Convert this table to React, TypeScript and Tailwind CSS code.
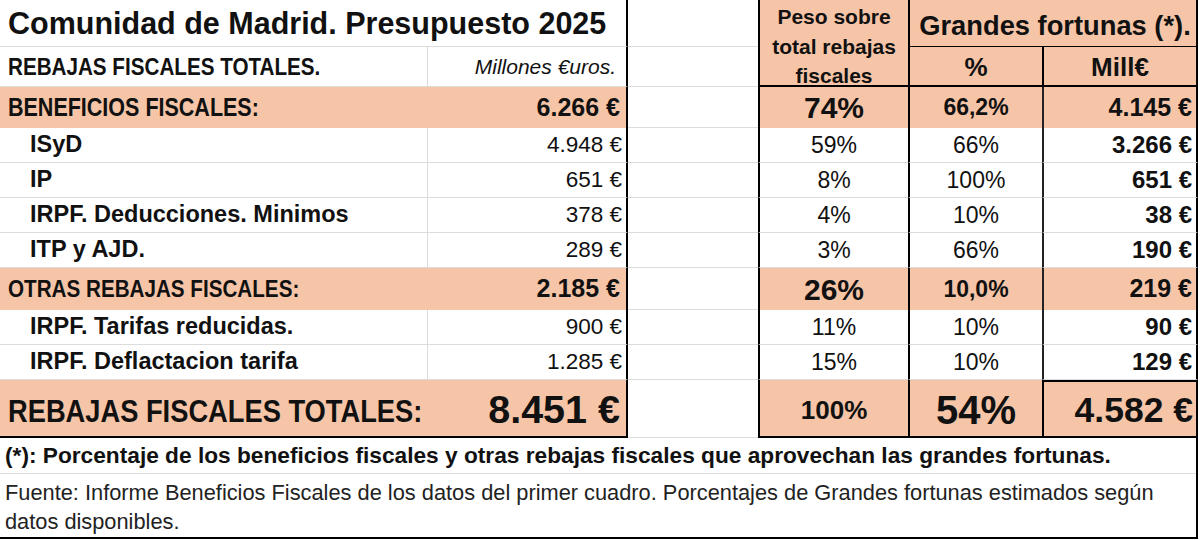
import type { ReactNode } from 'react';

const sans = "font-['Liberation_Sans',Arial,sans-serif]";
const peach = 'bg-[#f6c5a7]';

type Sub = {
  label: string;
  amount: string;
  share: string;
  pct: string;
  mill: string;
};

const beneficios: Sub[] = [
  { label: 'ISyD', amount: '4.948 €', share: '59%', pct: '66%', mill: '3.266 €' },
  { label: 'IP', amount: '651 €', share: '8%', pct: '100%', mill: '651 €' },
  { label: 'IRPF. Deducciones. Minimos', amount: '378 €', share: '4%', pct: '10%', mill: '38 €' },
  { label: 'ITP y AJD.', amount: '289 €', share: '3%', pct: '66%', mill: '190 €' },
];

const otras: Sub[] = [
  { label: 'IRPF. Tarifas reducidas.', amount: '900 €', share: '11%', pct: '10%', mill: '90 €' },
  { label: 'IRPF. Deflactacion tarifa', amount: '1.285 €', share: '15%', pct: '10%', mill: '129 €' },
];

function Cell({ className = '', children }: { className?: string; children?: ReactNode }) {
  return <div className={`flex items-center overflow-hidden whitespace-nowrap ${className}`}>{children}</div>;
}

// the sheet uses a narrow font for the upper-case labels
function Caps({ children }: { children: ReactNode }) {
  return <span className="inline-block origin-left scale-x-[0.86]">{children}</span>;
}

function SubRow({ row }: { row: Sub }) {
  return (
    <>
      <Cell className="border-b border-r border-[#dcdcdc] pl-[30px] text-[23.5px] font-bold">{row.label}</Cell>
      <Cell className="justify-end border-b border-r-2 border-b-[#dcdcdc] border-r-black pr-[4px] text-[22.5px]">
        {row.amount}
      </Cell>
      <Cell className="border-b border-[#dcdcdc]" />
      <Cell className="justify-center border-b border-l-2 border-b-[#dcdcdc] border-l-black text-[23px]">{row.share}</Cell>
      <Cell className="justify-center border-b border-l-2 border-b-[#dcdcdc] border-l-black text-[23px]">{row.pct}</Cell>
      <Cell className="justify-end border-b border-l-2 border-r-2 border-b-[#dcdcdc] border-l-[#222] border-r-black pr-[4px] text-[24px] font-bold">
        {row.mill}
      </Cell>
    </>
  );
}

function GroupRow({ label, amount, share, pct, mill, labelSize }: Sub & { labelSize: string }) {
  return (
    <>
      <Cell className={`${peach} pl-2 ${labelSize} font-bold`}>
        <Caps>{label}</Caps>
      </Cell>
      <Cell className={`justify-end border-r-2 border-black ${peach} pr-[6px] text-[25px] font-bold`}>{amount}</Cell>
      <Cell className="border-b border-[#dcdcdc]" />
      <Cell className={`justify-center border-l-2 border-black ${peach} text-[30px] font-bold`}>{share}</Cell>
      <Cell className={`justify-center border-l-2 border-black ${peach} text-[23px] font-bold`}>{pct}</Cell>
      <Cell className={`justify-end border-l-2 border-r-2 border-l-[#222] border-r-black ${peach} pr-[4px] text-[25px] font-bold`}>
        {mill}
      </Cell>
    </>
  );
}

export default function App() {
  return (
    <div className={`h-[540px] w-[1200px] overflow-hidden bg-white text-[#111] ${sans}`}>
      <div className="grid grid-cols-[428px_200px_130px_150px_134px_156px] grid-rows-[47px_40px_41px_35px_35px_35px_35px_42px_35px_35px_58px]">
        {/* header */}
        <Cell className="col-span-2 border-b border-r-2 border-b-[#dcdcdc] border-r-black pl-2 pt-[2px] text-[30.5px] font-bold">
          Comunidad de Madrid. Presupuesto 2025
        </Cell>
        <Cell className="border-b border-[#dcdcdc]" />
        <div
          className={`row-span-2 flex flex-col items-center justify-center border-b-2 border-l-2 border-black ${peach} pt-[8px] text-[21px] leading-[29.5px] font-bold`}
        >
          <span>Peso sobre</span>
          <span>total rebajas</span>
          <span>fiscales</span>
        </div>
        <Cell className={`col-span-2 justify-center border-b border-l-2 border-r-2 border-black ${peach} pt-[6px] pl-[4px] text-[27.3px] font-bold`}>
          Grandes fortunas (*).
        </Cell>

        <Cell className="border-b border-r border-[#dcdcdc] pl-2 text-[24px] font-bold">
          <Caps>REBAJAS FISCALES TOTALES.</Caps>
        </Cell>
        <Cell className="justify-end border-b border-r-2 border-b-[#dcdcdc] border-r-black pr-[10px] text-[21px] italic">
          Millones €uros.
        </Cell>
        <Cell className="border-b border-[#dcdcdc]" />
        <Cell className={`justify-center border-b-2 border-l-2 border-black ${peach} pt-[2px] text-[26px] font-bold`}>%</Cell>
        <Cell className={`justify-center border-b-2 border-l-2 border-r-2 border-black ${peach} pt-[2px] text-[26px] font-bold`}>
          Mill€
        </Cell>

        <GroupRow
          label="BENEFICIOS FISCALES:"
          labelSize="text-[25px]"
          amount="6.266 €"
          share="74%"
          pct="66,2%"
          mill="4.145 €"
        />
        {beneficios.map((row) => (
          <SubRow key={row.label} row={row} />
        ))}
        <GroupRow
          label="OTRAS REBAJAS FISCALES:"
          labelSize="text-[24px]"
          amount="2.185 €"
          share="26%"
          pct="10,0%"
          mill="219 €"
        />
        {otras.map((row) => (
          <SubRow key={row.label} row={row} />
        ))}

        {/* totals */}
        <Cell className={`border-b-2 border-black ${peach} pl-2 pt-[9px] text-[31px] font-bold`}>
          <span className="inline-block origin-left scale-x-[0.88]">REBAJAS FISCALES TOTALES:</span>
        </Cell>
        <Cell className={`justify-end border-b-2 border-r-2 border-black ${peach} pr-[6px] pt-[4px] text-[39.5px] font-bold`}>
          8.451 €
        </Cell>
        <Cell className="border-b border-[#dcdcdc]" />
        <Cell className={`items-end justify-center border-b-2 border-l-2 border-black ${peach} pb-[6px] text-[26px] font-bold`}>
          100%
        </Cell>
        <Cell className={`justify-center border-b-2 border-l-2 border-black ${peach} pt-[4px] text-[40px] font-bold`}>54%</Cell>
        <Cell className={`justify-end border-2 border-black ${peach} pr-[3px] pt-[4px] text-[35.5px] font-bold`}>4.582 €</Cell>
      </div>

      <div className="w-[1198px] border-r-2 border-b-2 border-black">
        <div className="flex h-[36px] items-center border-b border-[#dcdcdc] pl-[5px] text-[22.7px] font-bold">
          (*): Porcentaje de los beneficios fiscales y otras rebajas fiscales que aprovechan las grandes fortunas.
        </div>
        <div className="h-[63px] pl-[5px] pt-[4px] text-[21.8px] leading-[29px] text-[#222]">
          Fuente: Informe Beneficios Fiscales de los datos del primer cuadro. Porcentajes de Grandes fortunas estimados según
          <br />
          datos disponibles.
        </div>
      </div>
    </div>
  );
}
